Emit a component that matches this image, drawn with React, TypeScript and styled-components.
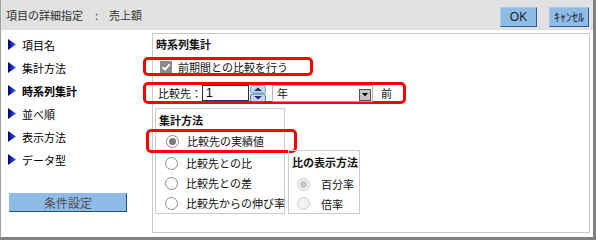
import React from 'react';
import styled, { createGlobalStyle } from 'styled-components';

const GlobalStyle = createGlobalStyle`
  html, body { margin: 0; padding: 0; background: #fff; }
  body {
    font-family: "Noto Sans CJK JP", "Noto Sans", sans-serif;
    font-size: 11px;
    color: #111;
  }
`;

const Frame = styled.div`
  width: 596px;
  height: 240px;
  box-sizing: border-box;
  border-left: 1px solid #a0a0a0;
  border-right: 3px solid #808080;
  border-bottom: 3px solid #808080;
  background: #fff;
  display: flex;
  flex-direction: column;
`;

const Header = styled.div`
  height: 30px;
  flex: none;
  background: #e1e1e1;
  display: flex;
  align-items: center;
  padding: 0 4px 0 5px;
`;

const HeaderTitle = styled.div`
  color: #333;
  line-height: 16px;
  white-space: nowrap;
`;

const Sep = styled.span`
  margin: 0 11px 0 12px;
`;

const HeaderButtons = styled.div`
  margin-left: auto;
  align-self: flex-end;
  margin-bottom: 3px;
  display: flex;
  gap: 12px;
`;

const BlueButton = styled.button<{ $w: number; $h: number; $font?: string }>`
  width: ${(p) => p.$w}px;
  height: ${(p) => p.$h}px;
  box-sizing: border-box;
  padding: 0;
  background: #8fbbe8;
  border: 1px solid #a8cdf1;
  border-right-color: #2a5d90;
  border-bottom-color: #2a5d90;
  font-family: ${(p) => p.$font ?? '"Noto Sans CJK JP", sans-serif'};
  font-size: 12px;
  color: #222;
  line-height: 1;
  display: flex;
  align-items: center;
  justify-content: center;
  cursor: pointer;
`;

const Body = styled.div`
  flex: 1;
  display: flex;
  padding-top: 3px;
`;

const Nav = styled.div`
  width: 151px;
  flex: none;
  display: flex;
  flex-direction: column;
  padding-left: 7px;
  box-sizing: border-box;
`;

const NavItem = styled.div<{ $active?: boolean }>`
  height: 23px;
  display: flex;
  align-items: center;
  gap: 6px;
  font-weight: ${(p) => (p.$active ? 700 : 400)};
  color: #000;
`;

const ConditionButton = styled(BlueButton)`
  margin: 22px 0 0 1px;
  color: #505050;
  border-color: #8fbbe8;
  border-right-color: #1f4e79;
  border-bottom-color: #1f4e79;
`;

const Panel = styled.div`
  width: 438px;
  height: 200px;
  box-sizing: border-box;
  border: 1px solid #c9c9c9;
  padding: 2px 0 0 2px;
  display: flex;
  flex-direction: column;
  align-items: flex-start;
`;

const BoldTitle = styled.div`
  font-weight: 700;
  line-height: 16px;
  margin-left: 1px;
  white-space: nowrap;
`;

const Callout = styled.div<{ $w: number; $h: number; $pad: number }>`
  width: ${(p) => p.$w}px;
  height: ${(p) => p.$h}px;
  box-sizing: border-box;
  border: 3px solid #ff0000;
  border-radius: 5px;
  display: flex;
  align-items: center;
  padding-left: ${(p) => p.$pad}px;
  margin-left: -12px;
  white-space: nowrap;
`;

const CheckLabel = styled.span`
  margin-left: 6px;
`;

const Field = styled.div`
  height: 16px;
  width: 47px;
  box-sizing: border-box;
  border: 1px solid #1f2d5c;
  background: #fff;
  padding-left: 3px;
  font-family: "Liberation Sans", sans-serif;
  font-size: 12px;
  line-height: 14px;
  color: #000;
`;

const Spin = styled.svg`
  margin-left: 1px;
  flex: none;
`;

const Select = styled.div`
  width: 101px;
  height: 17px;
  margin-left: 6px;
  box-sizing: border-box;
  border: 1px solid #b5b5b5;
  border-bottom-color: #9a9a9a;
  display: flex;
  align-items: center;
  justify-content: space-between;
  padding: 0 1px 0 4px;
  line-height: 14px;
`;

const DropButton = styled.div`
  width: 12px;
  height: 12px;
  box-sizing: border-box;
  border: 1px solid #555;
  background: #c4c4c4;
  display: flex;
  align-items: center;
  justify-content: center;
  align-self: flex-end;
  margin-bottom: 0;
`;

const Suffix = styled.span`
  margin-left: 8px;
`;

const GroupRow = styled.div`
  display: flex;
  align-items: flex-end;
  gap: 3px;
  margin-top: 4px;
`;

const Group = styled.div<{ $w: number; $h: number }>`
  width: ${(p) => p.$w}px;
  height: ${(p) => p.$h}px;
  box-sizing: border-box;
  border: 1px solid #cbcbcb;
  padding: 3px 0 0 2px;
  display: flex;
  flex-direction: column;
  align-items: flex-start;
`;

const RadioRow = styled.div<{ $pad: number; $gap: number; $h?: number }>`
  height: ${(p) => p.$h ?? 20}px;
  display: flex;
  align-items: center;
  gap: ${(p) => p.$gap}px;
  padding-left: ${(p) => p.$pad}px;
  white-space: nowrap;
`;

const Radio = styled.span<{ $checked?: boolean; $disabled?: boolean }>`
  width: 13px;
  height: 13px;
  flex: none;
  box-sizing: border-box;
  border-radius: 50%;
  border: 1px solid ${(p) => (p.$disabled ? '#cccccc' : '#8a8a8a')};
  background: ${(p) => (p.$disabled ? '#f2f2f2' : '#fff')};
  display: flex;
  align-items: center;
  justify-content: center;
  &::after {
    content: '';
    width: 7px;
    height: 7px;
    border-radius: 50%;
    background: ${(p) => (p.$disabled ? '#c6c6c6' : '#7a7a7a')};
    display: ${(p) => (p.$checked ? 'block' : 'none')};
  }
`;

const Arrow = () => (
  <svg width="8" height="11" viewBox="0 0 8 11">
    <defs>
      <linearGradient id="navArrow" x1="0" x2="1" y1="0" y2="0">
        <stop offset="0" stopColor="#000070" />
        <stop offset="1" stopColor="#3a5cff" />
      </linearGradient>
    </defs>
    <polygon points="0,0 8,5.5 0,11" fill="url(#navArrow)" />
  </svg>
);

const CheckBox = () => (
  <svg width="12" height="12" viewBox="0 0 12 12" style={{ flex: 'none' }}>
    <rect x="0" y="0" width="12" height="12" fill="#8a8a8a" />
    <polyline points="2.5,6.2 5,8.7 9.6,3.3" fill="none" stroke="#fff" strokeWidth="1.8" />
  </svg>
);

const Spinner = () => (
  <Spin width="16" height="17" viewBox="0 0 16 17">
    <rect x="0.5" y="0.5" width="15" height="7.5" rx="2" fill="#c6daf0" stroke="#7a9fcb" />
    <polygon points="4,6 8,2.5 12,6" fill="#17365f" />
    <rect x="0.5" y="9" width="15" height="7.5" rx="2" fill="#c6daf0" stroke="#4a72a8" />
    <polygon points="4,11 12,11 8,14.5" fill="#17365f" />
  </Spin>
);

const navItems = ['項目名', '集計方法', '時系列集計', '並べ順', '表示方法', 'データ型'];

export default function App() {
  return (
    <>
      <GlobalStyle />
      <Frame>
        <Header>
          <HeaderTitle>
            項目の詳細指定<Sep>:</Sep>売上額
          </HeaderTitle>
          <HeaderButtons>
            <BlueButton $w={37} $h={20} $font='"Liberation Sans", sans-serif'>OK</BlueButton>
            <BlueButton $w={40} $h={20}>ｷｬﾝｾﾙ</BlueButton>
          </HeaderButtons>
        </Header>
        <Body>
          <Nav>
            {navItems.map((label) => (
              <NavItem key={label} $active={label === '時系列集計'}>
                <Arrow />
                {label}
              </NavItem>
            ))}
            <ConditionButton $w={118} $h={19}>条件設定</ConditionButton>
          </Nav>
          <Panel>
            <BoldTitle>時系列集計</BoldTitle>
            <Callout $w={170} $h={19} $pad={14} style={{ marginTop: 5 }}>
              <CheckBox />
              <CheckLabel>前期間との比較を行う</CheckLabel>
            </Callout>
            <Callout $w={263} $h={22} $pad={12} style={{ marginTop: 6 }}>
              比較先：
              <Field>1</Field>
              <Spinner />
              <Select>
                年
                <DropButton>
                  <svg width="6" height="4" viewBox="0 0 6 4">
                    <polygon points="0,0 6,0 3,3.5" fill="#000" />
                  </svg>
                </DropButton>
              </Select>
              <Suffix>前</Suffix>
            </Callout>
            <GroupRow>
              <Group $w={130} $h={106}>
                <BoldTitle>集計方法</BoldTitle>
                <Callout $w={151} $h={24} $pad={17} style={{ marginTop: 1, gap: 8 }}>
                  <Radio $checked />
                  比較先の実績値
                </Callout>
                <RadioRow $pad={7} $gap={8}>
                  <Radio />
                  比較先との比
                </RadioRow>
                <RadioRow $pad={7} $gap={8}>
                  <Radio />
                  比較先との差
                </RadioRow>
                <RadioRow $pad={7} $gap={8}>
                  <Radio />
                  比較先からの伸び率
                </RadioRow>
              </Group>
              <Group $w={72} $h={64}>
                <BoldTitle>比の表示方法</BoldTitle>
                <RadioRow $pad={6} $gap={11} style={{ marginTop: 4 }}>
                  <Radio $checked $disabled />
                  百分率
                </RadioRow>
                <RadioRow $pad={6} $gap={11} $h={19}>
                  <Radio $disabled />
                  倍率
                </RadioRow>
              </Group>
            </GroupRow>
          </Panel>
        </Body>
      </Frame>
    </>
  );
}
